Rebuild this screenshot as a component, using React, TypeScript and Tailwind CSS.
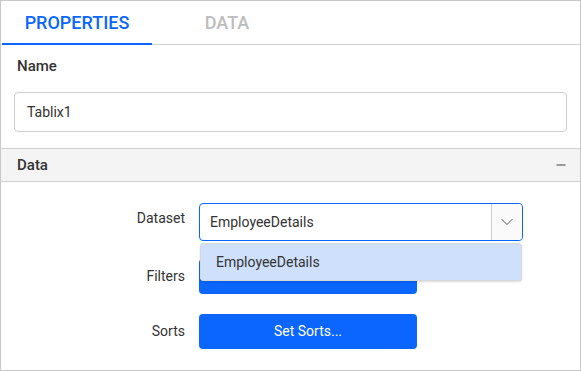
import { ChevronDown, Minus } from 'lucide-react';

export default function App() {
  return (
    <div className="w-[581px] h-[371px] bg-white border border-[#c8c8c8] font-['Roboto',sans-serif] text-[#333] overflow-hidden">
      {/* tabs */}
      <div className="flex h-[44px] border-b border-[#d0d0d0] pl-px">
        <div className="w-[150px] flex items-center justify-center border-b-2 border-[#0a66ff] -mb-px text-[18px] font-medium text-[#0a66ff]">
          PROPERTIES
        </div>
        <div className="w-[150px] flex items-center justify-center text-[18px] font-medium text-[#bdbdbd]">
          DATA
        </div>
      </div>

      {/* name */}
      <div className="px-[13px] pt-[13px] pb-[16px]">
        <div className="pl-[3px] text-[15px] font-medium leading-[17px] text-[#333]">Name</div>
        <div className="mt-[17px] h-[40px] border border-[#cfcfcf] rounded-[4px] flex items-center pl-[12px] text-[14px] text-[#333]">
          Tablix1
        </div>
      </div>

      {/* data header */}
      <div className="h-[34px] bg-[#f4f4f4] border-y border-[#d0d0d0] flex items-center justify-between pl-[16px] pr-[12px]">
        <span className="text-[15px] font-medium text-[#333]">Data</span>
        <Minus size={14} strokeWidth={1.6} className="text-[#333]" />
      </div>

      {/* data rows */}
      <div className="relative pt-[21px]">
        <div className="flex items-center">
          <div className="w-[185px] pr-px text-right text-[14px] text-[#333] -mt-[8px]">Dataset</div>
          <div className="ml-[13px] w-[324px] h-[38px] border border-[#0a66ff] rounded-[4px] flex items-stretch">
            <div className="flex-1 flex items-center pl-[10px] text-[14px] text-[#333]">EmployeeDetails</div>
            <div className="w-[31px] border-l border-[#cfcfcf] bg-[#fafafa] rounded-r-[4px] flex items-center justify-center">
              <ChevronDown size={20} strokeWidth={1.2} className="text-[#555]" />
            </div>
          </div>
        </div>

        <div className="flex items-center mt-[18px]">
          <div className="w-[185px] pr-px text-right text-[14px] text-[#333]">Filters</div>
          <button className="ml-[13px] w-[218px] h-[35px] bg-[#0a66ff] rounded-[4px] text-white text-[14px]">
            Set Filters...
          </button>
        </div>

        <div className="flex items-center mt-[20px]">
          <div className="w-[185px] pr-px text-right text-[14px] text-[#333]">Sorts</div>
          <button className="ml-[13px] w-[218px] h-[35px] bg-[#0a66ff] rounded-[4px] text-white text-[14px]">
            Set Sorts...
          </button>
        </div>

        {/* dropdown popup */}
        <div className="absolute left-[199px] top-[61px] w-[322px] h-[38px] bg-[#cfe0fc] border border-[#d8d8d8] rounded-[3px] shadow-[0_1px_2px_rgba(0,0,0,0.15)] flex items-center pl-[15px] text-[14px] text-[#333]">
          EmployeeDetails
        </div>
      </div>
    </div>
  );
}
